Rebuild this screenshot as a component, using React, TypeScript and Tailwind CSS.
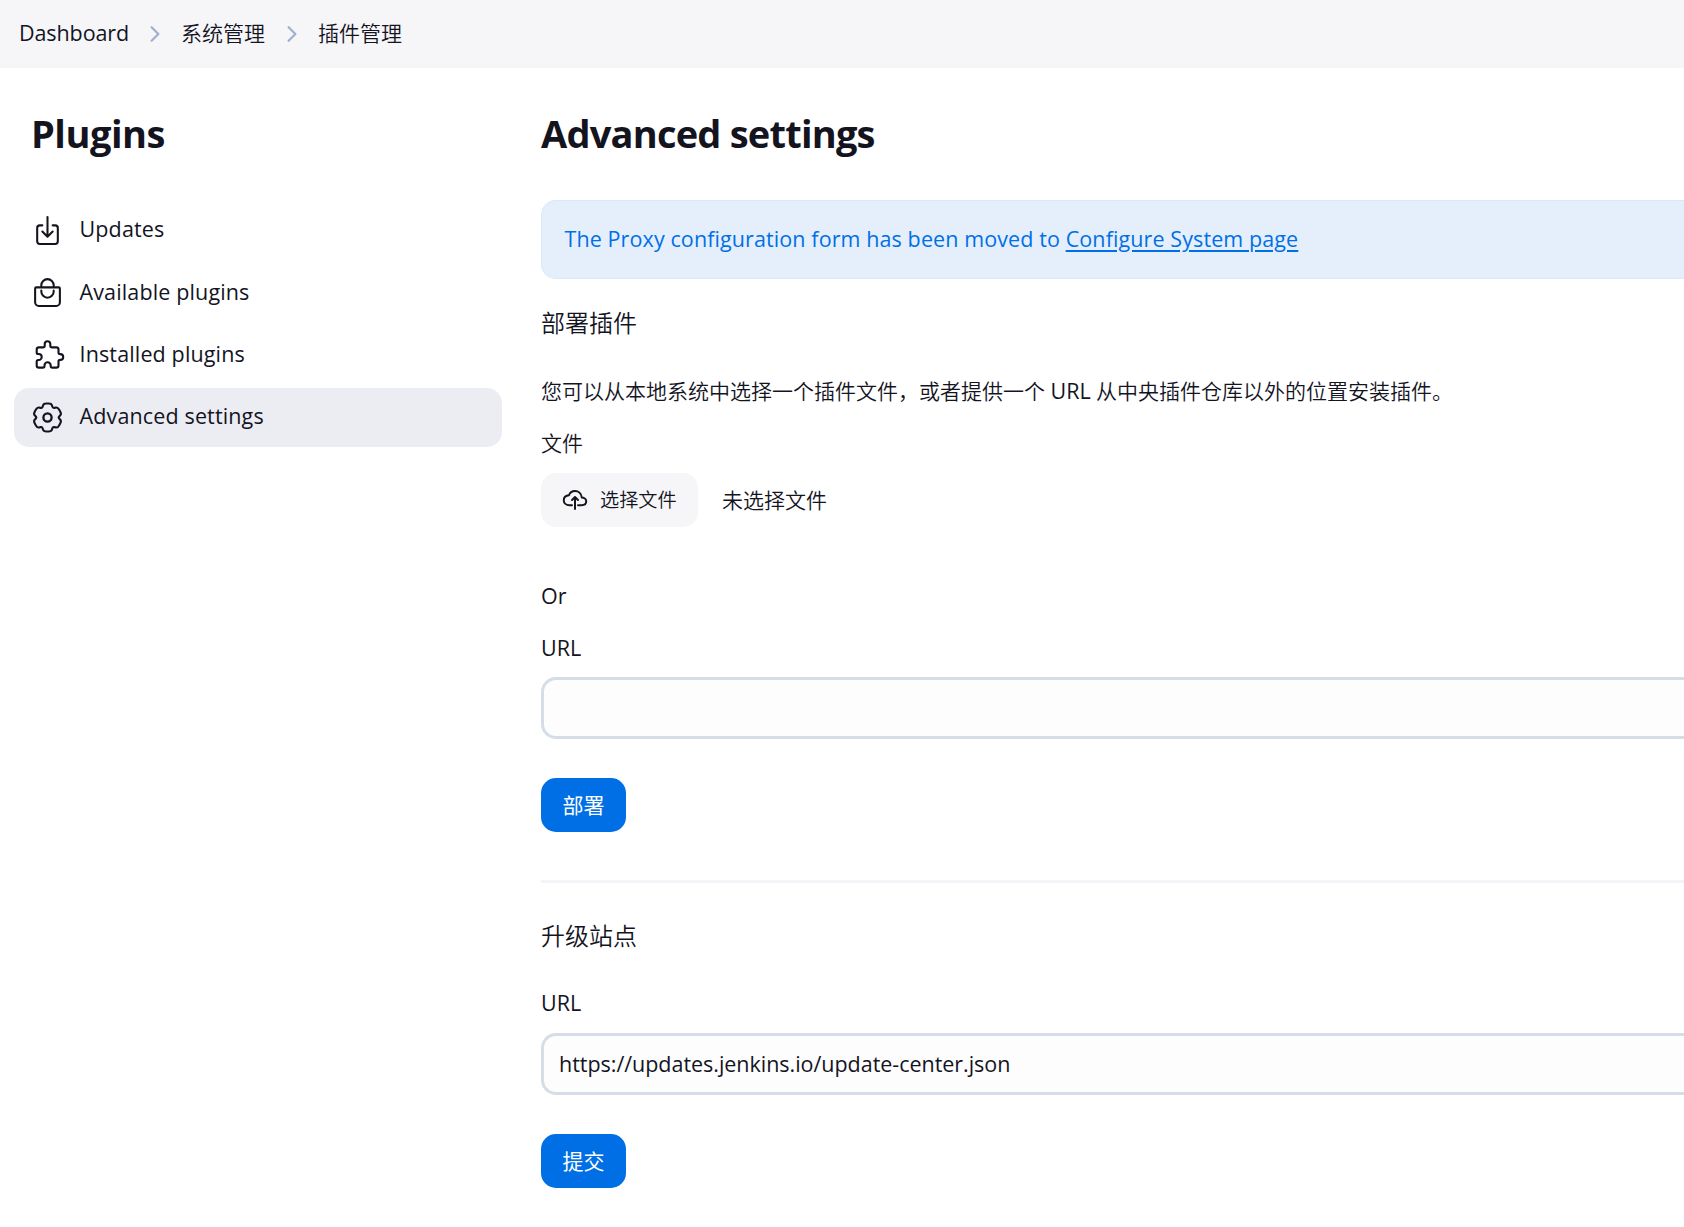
import type { ReactNode } from "react";
import { IoBagHandleOutline, IoChevronForward, IoDownloadOutline } from "react-icons/io5";

type Point = [number, number];

// Closed outline through the given corners, each corner softened by a quadratic curve.
function roundedPath(points: Point[], t: number) {
  const n = points.length;
  const mix = (a: Point, b: Point): string =>
    `${(a[0] + (b[0] - a[0]) * t).toFixed(2)} ${(a[1] + (b[1] - a[1]) * t).toFixed(2)}`;
  return (
    points
      .map((p, i) => {
        const prev = points[(i + n - 1) % n];
        const next = points[(i + 1) % n];
        return `${i === 0 ? "M" : "L"}${mix(p, prev)}Q${p[0].toFixed(2)} ${p[1].toFixed(2)} ${mix(p, next)}`;
      })
      .join("") + "Z"
  );
}

const gearCorners: Point[] = Array.from({ length: 6 }).flatMap((_, k) => {
  const a = (k * Math.PI) / 3;
  const lobe: Point[] = [
    [-3.9, -14],
    [3.9, -14],
    [5.3, -9.2],
  ];
  return lobe.map(([x, y]): Point => [x * Math.cos(a) - y * Math.sin(a), x * Math.sin(a) + y * Math.cos(a)]);
});

function GearIcon({ className }: { className?: string }) {
  return (
    <svg viewBox="-16.5 -16.5 33 33" className={className} fill="none" stroke="currentColor" strokeWidth="2.1">
      <path d={roundedPath(gearCorners, 0.36)} strokeLinejoin="round" />
      <circle r="4.1" strokeWidth="2.3" />
    </svg>
  );
}

function PuzzleIcon({ className }: { className?: string }) {
  return (
    <svg
      viewBox="3 4 33 33"
      className={`overflow-visible ${className}`}
      fill="none"
      stroke="currentColor"
      strokeWidth="2.1"
      strokeLinejoin="round"
    >
      <path d="M11 12.4H15q1.7 0 1.7-1.7V9a2.8 2.8 0 0 1 5.6 0v1.7q0 1.7 1.7 1.7h4.3q2.2 0 2.2 2.2v2.8q0 1.7 1.7 1.7h.1a2.9 2.9 0 0 1 0 5.8h-.1q-1.7 0-1.7 1.7v3.8q0 2.2-2.2 2.2H24.3q-1.6 0-1.6-1.6v-.6a3.1 3.1 0 0 0-6.2 0v.6q0 1.6-1.6 1.6H10.9q-2.2 0-2.2-2.2V26.6q0-1.6 1.6-1.6h.4a3 3 0 0 0 0-6h-.4q-1.6 0-1.6-1.6V14.6q0-2.2 2.3-2.2z" />
    </svg>
  );
}

function CloudUploadIcon({ className }: { className?: string }) {
  return (
    <svg
      viewBox="0 0 512 512"
      className={`overflow-visible ${className}`}
      fill="none"
      stroke="currentColor"
      strokeWidth="42"
      strokeLinecap="round"
      strokeLinejoin="round"
    >
      <path d="M320 367.79h76c55 0 100-29.21 100-83.6s-53-81.47-96-83.6c-8.89-85.06-71-136.8-144-136.8-69 0-113.44 45.79-128 91.2-60 5.7-112 43.88-112 106.4s54 106.4 120 106.4h56" />
      <path d="M320 255.79l-64-64-64 64M256 448.21V207.79" />
    </svg>
  );
}

const navItems = [
  { label: "Updates", icon: IoDownloadOutline, active: false },
  { label: "Available plugins", icon: IoBagHandleOutline, active: false },
  { label: "Installed plugins", icon: PuzzleIcon, active: false },
  { label: "Advanced settings", icon: GearIcon, active: true },
];

function Label({ children }: { children: ReactNode }) {
  return <label className="block h-8 leading-8">{children}</label>;
}

function PrimaryButton({ children }: { children: ReactNode }) {
  return (
    <button className="flex h-[54px] w-[85px] items-center justify-center rounded-[15px] bg-[#006fe6] pb-px text-white">
      {children}
    </button>
  );
}

function TextField({ value }: { value: string }) {
  return (
    <input
      readOnly
      value={value}
      className="block h-[62px] w-full rounded-l-[15px] border-[3px] border-r-0 border-[#d6dde7] bg-[#fdfdfe] px-[15px] pb-0.5 text-[21.5px] tracking-[-0.03px] outline-none"
    />
  );
}

export default function App() {
  return (
    <div className="h-[1227px] w-full overflow-hidden bg-white font-['Open_Sans','Noto_Sans_CJK_SC',sans-serif] text-[21px] leading-8 text-[#14141f]">
      <nav className="flex h-[68px] items-center bg-[#f6f6f9] pl-[19px]">
        <span className="mb-0.5 w-[110px] text-[21.5px] tracking-[-0.1px]">Dashboard</span>
        <IoChevronForward className="mx-[14px] size-6 text-[#9fb1cc]" />
        <span className="mb-0.5 w-[85px] font-[350]">系统管理</span>
        <IoChevronForward className="mx-[14px] size-6 text-[#9fb1cc]" />
        <span className="mb-0.5 font-[350]">插件管理</span>
      </nav>

      <div className="flex">
        <aside className="w-[502px] shrink-0 pl-[14px]">
          <h1 className="mt-[38px] h-14 pl-[17px] text-[38px] leading-[54px] font-bold tracking-[-0.5px]">Plugins</h1>
          <ul className="mt-[39px] flex flex-col gap-[3.33px]">
            {navItems.map(({ label, icon: Icon, active }) => (
              <li
                key={label}
                className={`flex h-[59px] items-center rounded-[15px] pl-[17px] ${active ? "bg-[#ecedf3]" : ""}`}
              >
                <Icon className="size-[33px]" />
                <span className="mb-[2.5px] ml-[15.5px] text-[21.5px] tracking-[0.14px]">{label}</span>
              </li>
            ))}
          </ul>
        </aside>

        <main className="min-w-0 flex-1 pl-[39px]">
          <h1 className="mt-[38px] h-14 text-[38px] leading-[54px] font-bold tracking-[-0.78px]">Advanced settings</h1>
          <div className="mt-[38px] flex h-[79px] items-center rounded-l-[15px] border border-r-0 border-[#d9e8fb] bg-[#e5effc] pb-0.5 pl-[22.5px] text-[#006fe6]">
            <p className="text-[21.5px] tracking-[0.1px]">
              The Proxy configuration form has been moved to{" "}
              <a className="underline decoration-2 underline-offset-[3px]">Configure System page</a>
            </p>
          </div>

          <h2 className="mt-[26px] h-9 text-2xl leading-9 font-[350]">部署插件</h2>
          <p className="mt-[34px] h-[33px] font-[350]">
            您可以从本地系统中选择一个插件文件，或者提供一个{" "}
            <span className="text-[21.5px] font-normal">URL</span> 从中央插件仓库以外的位置安装插件。
          </p>
          <div className="mt-[19px] font-[350]">
            <Label>文件</Label>
          </div>
          <div className="mt-[14px] flex h-[54px] items-center">
            <button className="flex h-[54px] w-[157px] items-center rounded-[15px] bg-[#f6f6f9] pl-[22px] text-[19.2px] font-[350]">
              <CloudUploadIcon className="mr-[13px] size-6" />
              选择文件
            </button>
            <span className="ml-6 font-[350]">未选择文件</span>
          </div>

          <p className="mt-[53px] h-8 text-[21.5px]">Or</p>
          <div className="mt-5 text-[21.5px]">
            <Label>URL</Label>
          </div>
          <div className="mt-[13px]">
            <TextField value="" />
          </div>
          <div className="mt-[39px]">
            <PrimaryButton>部署</PrimaryButton>
          </div>

          <hr className="mt-12 h-[3px] border-0 bg-[#f3f3f8]" />

          <h2 className="mt-[35px] h-9 text-2xl leading-9 font-[350]">升级站点</h2>
          <div className="mt-[33px] text-[21.5px]">
            <Label>URL</Label>
          </div>
          <div className="mt-[14px]">
            <TextField value="https://updates.jenkins.io/update-center.json" />
          </div>
          <div className="mt-[39px]">
            <PrimaryButton>提交</PrimaryButton>
          </div>
        </main>
      </div>
    </div>
  );
}
